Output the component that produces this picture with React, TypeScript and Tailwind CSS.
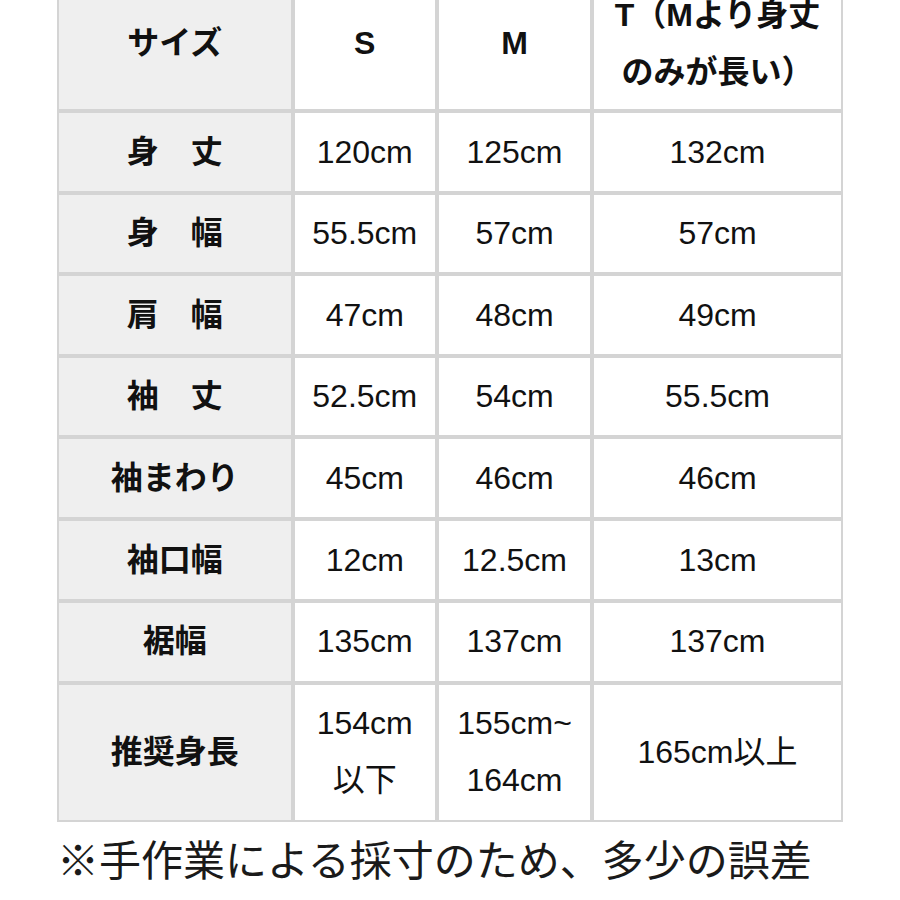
import React from "react";

const jp = "font-['Liberation_Sans','Noto_Sans_CJK_JP',sans-serif]";

const rows: { label: string; s: React.ReactNode; m: React.ReactNode; t: React.ReactNode }[] = [
  { label: "身　丈", s: "120cm", m: "125cm", t: "132cm" },
  { label: "身　幅", s: "55.5cm", m: "57cm", t: "57cm" },
  { label: "肩　幅", s: "47cm", m: "48cm", t: "49cm" },
  { label: "袖　丈", s: "52.5cm", m: "54cm", t: "55.5cm" },
  { label: "袖まわり", s: "45cm", m: "46cm", t: "46cm" },
  { label: "袖口幅", s: "12cm", m: "12.5cm", t: "13cm" },
  { label: "裾幅", s: "135cm", m: "137cm", t: "137cm" },
  {
    label: "推奨身長",
    s: (
      <>
        154cm
        <br />
        以下
      </>
    ),
    m: (
      <>
        155cm~
        <br />
        164cm
      </>
    ),
    t: "165cm以上",
  },
];

const cell =
  "border-2 border-[#d4d4d4] flex items-center justify-center text-center text-[32px] leading-[57px] text-[#111]";

export default function App() {
  return (
    <div className={`w-[900px] h-[900px] overflow-hidden bg-white ${jp}`}>
      <div className="ml-[57px] -mt-[24px] w-[786px] grid grid-cols-[235.5px_144.5px_155px_251px] grid-rows-[135px_82px_81px_82px_81px_82px_82px_81.5px_139.5px]">
        <div className={`${cell} bg-[#efefef] font-bold`}>サイズ</div>
        <div className={`${cell} bg-white font-bold`}>S</div>
        <div className={`${cell} bg-white font-bold`}>M</div>
        <div className={`${cell} bg-white font-bold`}>
          <span>
            T（Mより身丈
            <br />
            のみが長い）
          </span>
        </div>
        {rows.map((r, i) => (
          <React.Fragment key={i}>
            <div className={`${cell} bg-[#efefef] font-bold`}>{r.label}</div>
            <div className={`${cell} bg-white`}>
              <span>{r.s}</span>
            </div>
            <div className={`${cell} bg-white`}>
              <span>{r.m}</span>
            </div>
            <div className={`${cell} bg-white`}>
              <span>{r.t}</span>
            </div>
          </React.Fragment>
        ))}
      </div>
      <div className="ml-[57px] text-[42px] leading-[72px] text-[#1a1a1a] whitespace-nowrap font-['Noto_Sans_CJK_JP',sans-serif]">
        ※手作業による採寸のため、多少の誤差
      </div>
    </div>
  );
}
